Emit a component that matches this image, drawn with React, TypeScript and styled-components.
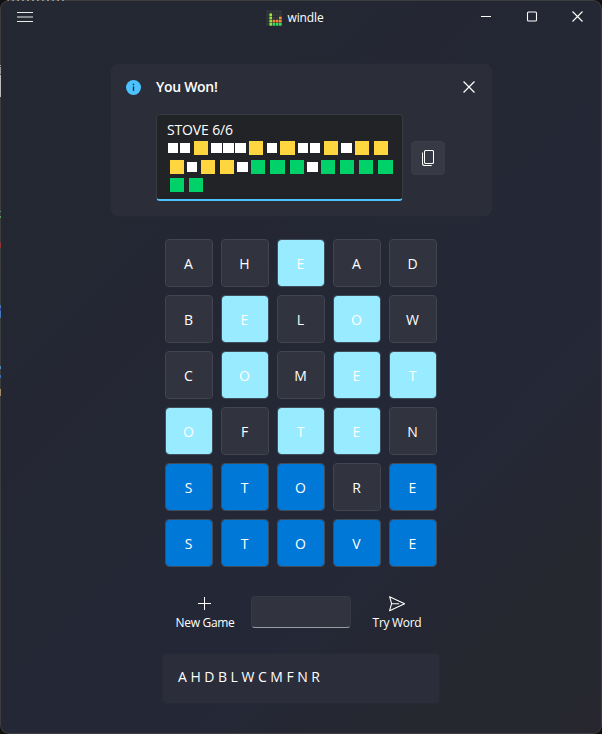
import React from "react";
import styled, { createGlobalStyle } from "styled-components";

const GlobalStyle = createGlobalStyle`
  * { box-sizing: border-box; }
  body { margin: 0; background: #111; overflow: hidden; }
  button { font: inherit; color: inherit; border: 0; padding: 0; background: none; }
`;

const Desktop = styled.div`
  width: 602px;
  height: 734px;
  padding: 1px;
  border-radius: 9px;
  background:
    repeating-linear-gradient(90deg, #3b3b3b 0 3px, #a98b6d 3px 5px, #3b3b3b 5px 8px, #7895ad 8px 10px) 4px 0 / 61px 1px no-repeat,
    linear-gradient(180deg, #3c3c3c 0 65px, #aaa 65px 66px, #3c3c3c 66px 67px, #999 67px 74px, #555 74px 75px, #bbb 75px 97px, #3c3c3c 97px 211px, #5b9b88 211px 212px, #3c3c3c 212px 216px, #5b9b68 216px 218px, #3c3c3c 218px 242px, #8c3535 242px 248px, #3c3c3c 248px 305px, #4579a8 305px 308px, #3548a0 308px 311px, #4579b8 311px 318px, #3c3c3c 318px 366px, #4a8fbc 366px 369px, #3c3c3c 369px 375px, #3b70bd 375px 378px, #3c3c3c 378px 389px, #a58c65 389px 396px, #3c3c3c 396px) 0 0 / 1px 734px no-repeat,
    #3d3d3f;
`;

const Window = styled.main`
  display: flex;
  flex-direction: column;
  align-items: center;
  width: 600px;
  height: 732px;
  border-radius: 8px;
  overflow: hidden;
  color: #fff;
  font: 14px/20px "Open Sans", "Noto Sans", sans-serif;
  background: linear-gradient(135deg, #232832 0%, #242733 35%, #242736 68%, #25282f 86%, #25282f 94%, #28262e 100%);
`;

const TitleBar = styled.header`
  display: grid;
  grid-template-columns: 1fr auto 1fr;
  align-items: center;
  flex: none;
  width: 100%;
  height: 31px;
  margin-bottom: 1px;
  padding: 0 18px 0 16px;
`;

const MenuSvg = styled.svg`
  margin: 1px auto 0 0;
`;

const AppName = styled.div`
  display: flex;
  align-items: center;
  gap: 5px;
  padding-top: 2px;
  font-size: 12px;
  letter-spacing: -0.12px;
  margin-right: 10px;
`;

const WindowButtons = styled.div`
  display: flex;
  justify-content: flex-end;
  gap: 34px;
`;

const IconButton = styled.button`
  display: flex;
  align-items: center;
  justify-content: center;
`;

const InfoCard = styled.section`
  flex: none;
  width: 383px;
  height: 154px;
  margin: 30px 0 0 1px;
  padding: 14px 17px 0 15px;
  border: 1px solid #262933;
  border-radius: 8px;
  background: #2b2e38;
`;

const CardHeader = styled.div`
  display: flex;
  align-items: center;
  height: 18px;
`;

const CardTitle = styled.h1`
  flex: 1;
  margin: 0 0 0 15px;
  font-size: 14px;
  font-weight: 600;
  line-height: 18px;
  letter-spacing: -0.3px;
`;

const CardBody = styled.div`
  display: flex;
  align-items: center;
  gap: 8px;
  margin: 18px 0 0 30px;
`;

const ResultBox = styled.div`
  width: 247px;
  height: 87px;
  padding: 5px 0 0 10px;
  border: 1px solid #373a42;
  border-bottom: 2px solid #4cc2ff;
  border-radius: 4px;
  background: #212327;
  letter-spacing: -0.15px;
`;

const EmojiRow = styled.div`
  display: flex;
  align-items: center;
  height: 14px;
  margin: 0 0 5px;
  &:first-of-type { margin-top: 1px; }
  &:last-child { margin-top: -1px; }
`;

const Emoji = styled.span<{ $kind: string }>`
  flex: none;
  width: ${p => (p.$kind === "w" ? "10.4px" : "14.2px")};
  height: ${p => (p.$kind === "w" ? "10px" : "14px")};
  margin: 0 ${p => (p.$kind === "w" ? "0.85px" : "2.5px")};
  background: ${p => (p.$kind === "w" ? "#fff" : p.$kind === "y" ? "#ffd63f" : "#00d269")};
`;

const CopyButton = styled(IconButton)`
  width: 34px;
  height: 34px;
  border: 1px solid #3a3c47;
  border-radius: 4px;
  background: #373944;
`;

const Board = styled.div`
  display: grid;
  grid-template-columns: repeat(5, 48px);
  grid-auto-rows: 48px;
  gap: 8px;
  margin-top: 22px;
`;

const tileColors: Record<string, string> = { n: "#31343f", p: "#99ebff", c: "#0078d7" };

const Tile = styled.div<{ $state: string }>`
  display: flex;
  align-items: center;
  justify-content: center;
  padding: 2px 1px 0 0;
  border: 1px solid ${p => (p.$state === "n" ? "#424550" : "#3f4d5d")};
  border-radius: 4px;
  background: ${p => tileColors[p.$state]};
  background-clip: padding-box;
`;

const Controls = styled.div`
  display: flex;
  margin: 29px 0 0 -5px;
  height: 35px;
`;

const CommandButton = styled.button<{ $width: number }>`
  display: flex;
  flex-direction: column;
  align-items: center;
  gap: 3px;
  width: ${p => p.$width}px;
  font-size: 12px;
  line-height: 16px;
  letter-spacing: -0.3px;
  white-space: nowrap;
`;

const WordInput = styled.input`
  width: 100px;
  height: 32px;
  margin: 0 21px 0 16px;
  border: 1px solid #363944;
  border-bottom-color: #9a9ca3;
  border-radius: 4px;
  outline: 0;
  background: #31343f;
`;

const UsedLetters = styled.section`
  width: 278px;
  height: 51px;
  margin-top: 22px;
  padding: 13px 15px;
  border: 1px solid #272a35;
  border-radius: 4px;
  background: #2b2d3a;
  letter-spacing: -0.04px;
`;

const rows = [
  ["AHEAD", "nnpnn"],
  ["BELOW", "npnpn"],
  ["COMET", "npnpp"],
  ["OFTEN", "pnppn"],
  ["STORE", "cccnc"],
  ["STOVE", "ccccc"],
];

const emojiRows = ["wwywwwywywwywyy", "ywyywgggwgggg", "gg"];

const lime = "#9be43c", green = "#35dc5b", orange = "#ee8b35", dark = "#34383a";
const logoCells = [
  [dark, dark, dark, dark, dark],
  [dark, lime, dark, dark, dark],
  [dark, lime, dark, dark, orange],
  [dark, lime, orange, orange, orange],
  [dark, "#8ee646", green, green, green],
];

const Logo = () => (
  <svg width="16" height="16" viewBox="0 0 16 16">
    {logoCells.flatMap((r, y) =>
      r.map((c, x) => <rect key={`${x}-${y}`} x={x * 3.2 + 0.2} y={y * 3.2 + 0.2} width="2.7" height="2.7" fill={c} />)
    )}
  </svg>
);

const Cross = ({ size }: { size: number }) => (
  <svg width={size} height={size} viewBox="0 0 11 11" fill="none" stroke="#fff" strokeWidth="1.1">
    <path d="M.5.5l10 10M10.5.5l-10 10" />
  </svg>
);

export default function App() {
  return (
    <>
      <GlobalStyle />
      <Desktop>
        <Window>
          <TitleBar>
            <IconButton aria-label="Menu">
              <MenuSvg width="16" height="10" stroke="#fff">
                <path d="M0 .5h16M0 5h16M0 9.5h16" strokeOpacity=".9" />
              </MenuSvg>
            </IconButton>
            <AppName><Logo />windle</AppName>
            <WindowButtons>
              <IconButton aria-label="Minimize">
                <svg width="12" height="11"><path d="M1 5.5h10" stroke="#fff" /></svg>
              </IconButton>
              <IconButton aria-label="Maximize">
                <svg width="12" height="11"><rect x="1.5" y="1" width="9" height="9" rx="1" fill="none" stroke="#fff" strokeWidth="1.1" /></svg>
              </IconButton>
              <IconButton aria-label="Close"><Cross size={11} /></IconButton>
            </WindowButtons>
          </TitleBar>
          <InfoCard>
            <CardHeader>
              <svg width="15" height="16" viewBox="0 0 15 16">
                <circle cx="7.5" cy="8.5" r="7.5" fill="#4cc2ff" />
                <path d="M7.5 7.5v4.2M7.5 4.8v1.4" stroke="#18202a" strokeWidth="1.3" />
              </svg>
              <CardTitle>You Won!</CardTitle>
              <IconButton aria-label="Dismiss"><Cross size={12} /></IconButton>
            </CardHeader>
            <CardBody>
              <ResultBox>
                <span>STOVE 6/6</span>
                {emojiRows.map(r => (
                  <EmojiRow key={r}>{r.split("").map((k, i) => <Emoji key={i} $kind={k} />)}</EmojiRow>
                ))}
              </ResultBox>
              <CopyButton aria-label="Copy">
                <svg width="12" height="16" viewBox="0 0 12 16" fill="none" stroke="#fff" strokeWidth="1.05">
                  <rect x="2.5" y=".5" width="9" height="13" rx="1.2" />
                  <path d="M.5 2.5v11a2 2 0 0 0 2 2h7.2" />
                </svg>
              </CopyButton>
            </CardBody>
          </InfoCard>
          <Board>
            {rows.flatMap(([word, states], y) =>
              word.split("").map((letter, x) => <Tile key={`${x}-${y}`} $state={states[x]}>{letter}</Tile>)
            )}
          </Board>
          <Controls>
            <CommandButton $width={60}>
              <svg width="16" height="16"><path d="M7.5 1v13M1 7.5h13" stroke="#fff" fill="none" /></svg>
              New Game
            </CommandButton>
            <WordInput aria-label="Word" />
            <CommandButton $width={50}>
              <svg width="16" height="16" viewBox="0 0 16 16" fill="none" stroke="#fff" strokeWidth="1.1" strokeLinejoin="round">
                <path d="M.6.7l15 7-15 7 2-7zM2.6 7.7h7.5" />
              </svg>
              Try Word
            </CommandButton>
          </Controls>
          <UsedLetters>A H D B L W C M F N R</UsedLetters>
        </Window>
      </Desktop>
    </>
  );
}
